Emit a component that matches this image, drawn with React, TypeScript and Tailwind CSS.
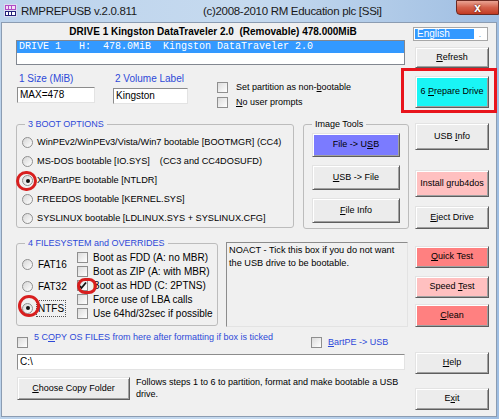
import type { ReactNode } from 'react';

function Btn({ children, className = '' }: { children: ReactNode; className?: string }) {
  return (
    <div
      className={`flex items-center justify-center border border-t-[#e3e3e3] border-l-[#e3e3e3] border-r-[#5e5e5e] border-b-[#5e5e5e] shadow-[inset_1px_1px_0_#ffffff,inset_-1px_-1px_0_#a0a0a0] ${className}`}
    >
      <span>{children}</span>
    </div>
  );
}

function Check({ checked = false }: { checked?: boolean }) {
  return (
    <div className="w-[11px] h-[11px] shrink-0 border border-[#8f8f8f] bg-gradient-to-br from-[#dcdcdc] to-[#ffffff] flex items-center justify-center">
      {checked && (
        <svg width="9" height="9" viewBox="0 0 9 9">
          <path d="M1 4.5 L3.5 7 L8 1.5" fill="none" stroke="#111" strokeWidth="1.8" />
        </svg>
      )}
    </div>
  );
}

function Radio({ checked = false }: { checked?: boolean }) {
  return (
    <div className="w-[11px] h-[11px] shrink-0 rounded-full border border-[#8f8f8f] bg-gradient-to-br from-[#d6d6d6] to-[#ffffff] flex items-center justify-center">
      {checked && <div className="w-[4px] h-[4px] rounded-full bg-[#111]" />}
    </div>
  );
}

function Group({ title, blue = true, className = '', children }: { title: string; blue?: boolean; className?: string; children: ReactNode }) {
  return (
    <div className={`relative border border-[#bcbcbc] rounded-[3px] ${className}`}>
      <span
        className={`absolute -top-[7px] left-[8px] px-[3px] bg-[#f0f0f0] leading-[12px] ${blue ? 'text-[#2e49d8]' : 'text-black'}`}
      >
        {title}
      </span>
      {children}
    </div>
  );
}

const bootOptions = [
  <>WinPEv2/WinPEv3/Vista/Win7 bootable [BOOTMGR] (CC4)</>,
  <>
    MS-DOS bootable [IO.SYS]<span className="ml-[10px]">(CC3 and CC4DOSUFD)</span>
  </>,
  <>XP/BartPE bootable [NTLDR]</>,
  <>FREEDOS bootable [KERNEL.SYS]</>,
  <>SYSLINUX bootable [LDLINUX.SYS + SYSLINUX.CFG]</>,
];

const overrides = [
  'Boot as FDD (A: no MBR)',
  'Boot as ZIP (A: with MBR)',
  'Boot as HDD (C: 2PTNS)',
  'Force use of LBA calls',
  'Use 64hd/32sec if possible',
];

export default function App() {
  return (
    <div className="relative w-[499px] h-[419px] overflow-hidden bg-gradient-to-r from-[#bcd3ec] via-[#c6daef] to-[#9fbee2] font-['Liberation_Sans',Arial,sans-serif] text-[9px] text-black">
      {/* title bar */}
      <div className="h-[22px] flex items-start">
        <svg className="mt-[4px] ml-[4px]" width="13" height="13" viewBox="0 0 13 13">
          <rect x="0" y="0" width="13" height="13" fill="#dcdcf0" />
          <rect x="1" y="1" width="11" height="5" fill="#b04cc4" />
          <rect x="2" y="2" width="2" height="3" fill="#f4e0f8" />
          <rect x="5" y="2" width="2" height="3" fill="#f4e0f8" />
          <rect x="8" y="2" width="3" height="3" fill="#f4e0f8" />
          <rect x="1" y="7" width="11" height="5" fill="#23237a" />
          <rect x="2" y="8" width="2" height="3" fill="#ffffff" />
          <rect x="5" y="8" width="2" height="3" fill="#ffffff" />
          <rect x="8" y="8" width="3" height="3" fill="#ffffff" />
        </svg>
        <span className="ml-[4px] mt-[3px] text-[11.5px] tracking-[-0.3px] text-[#1a1a1a]">
          RMPREPUSB v.2.0.811
        </span>
        <span className="ml-[66px] mt-[3px] text-[11.5px] tracking-[-0.3px] text-[#1a1a1a]">
          (c)2008-2010 RM Education plc [SSi]
        </span>
        <div className="ml-auto w-[43px] h-[15px] rounded-bl-[4px] border border-[#6b2a22] bg-gradient-to-b from-[#e9a393] via-[#d3604a] to-[#c23a21] flex items-center justify-center">
          <span className="text-white font-bold text-[12px] leading-none [text-shadow:0_0_2px_#3a0d05]">x</span>
        </div>
      </div>

      {/* client area */}
      <div className="ml-[1px] w-[496px] h-[395px] bg-[#f0f0f0] border border-[#8b9cb2] flex pl-[14px]">
        {/* left column */}
        <div className="w-[394px] flex flex-col">
          <div className="mt-[2px] h-[13px] flex items-center justify-center font-bold text-[10px] whitespace-pre">
            DRIVE 1 Kingston DataTraveler 2.0  (Removable) 478.000MiB
          </div>
          <div className="mt-[2px] w-[389px] h-[25px] bg-white border border-[#828790]">
            <div className="h-[12px] bg-[#3399ff] text-white font-['Liberation_Mono',monospace] text-[10px] leading-[12px] pl-[2px] whitespace-pre">
              DRIVE 1   H:  478.0MiB  Kingston DataTraveler 2.0
            </div>
          </div>

          {/* size / label / options */}
          <div className="mt-[9px] h-[30px] flex">
            <div className="flex flex-col w-[97px]">
              <span className="pl-[3px] text-[#2e49d8] text-[10px] leading-[10px]">1 Size (MiB)</span>
              <div className="mt-[3px] ml-[1px] w-[78px] h-[16px] bg-white border border-[#8c8c8c] border-b-[#e3e3e3] border-r-[#e3e3e3] pl-[2px] text-[10px] leading-[14px]">
                MAX=478
              </div>
            </div>
            <div className="flex flex-col w-[104px]">
              <span className="pl-[2px] text-[#2e49d8] text-[10px] leading-[10px]">2 Volume Label</span>
              <div className="mt-[4px] w-[75px] h-[16px] bg-white border border-[#8c8c8c] border-b-[#e3e3e3] border-r-[#e3e3e3] pl-[2px] text-[10px] leading-[14px]">
                Kingston
              </div>
            </div>
            <div className="flex flex-col pt-[8px] gap-[4px]">
              <div className="flex items-center gap-[8px] h-[11px]">
                <Check />
                <span>
                  Set partition as non-<u>b</u>ootable
                </span>
              </div>
              <div className="flex items-center gap-[8px] h-[11px]">
                <Check />
                <span>
                  <u>N</u>o user prompts
                </span>
              </div>
            </div>
          </div>

          {/* boot options + image tools */}
          <div className="mt-[20px] h-[105px] flex">
            <Group title="3 BOOT OPTIONS" className="w-[278px] h-[104px] pt-[8px] pl-[5px]">
              {bootOptions.map((o, i) => (
                <div key={i} className="h-[19px] flex items-center gap-[4px] whitespace-pre text-[9.2px]">
                  <Radio checked={i === 2} />
                  <span>{o}</span>
                </div>
              ))}
            </Group>
            <Group title="Image Tools" blue={false} className="ml-[9px] w-[106px] h-[105px] pt-[8px] pl-[8px] flex flex-col gap-[8px]">
              <Btn className="w-[88px] h-[24px] bg-[#7b7bff]">
                File -&gt; U<u>S</u>B
              </Btn>
              <Btn className="w-[88px] h-[25px] bg-[#ececec]">
                <u>U</u>SB -&gt; File
              </Btn>
              <Btn className="w-[88px] h-[25px] bg-[#ececec]">
                <u>F</u>ile Info
              </Btn>
            </Group>
          </div>

          {/* filesystem + NOACT */}
          <div className="mt-[13px] h-[85px] flex">
            <Group title="4 FILESYSTEM and OVERRIDES" className="mt-[1px] w-[202px] h-[83px] flex">
              <div className="w-[60px] pt-[9px] pl-[5px] flex flex-col">
                {['FAT16', 'FAT32', 'NTFS'].map((f, i) => (
                  <div key={f} className="h-[22px] flex items-center gap-[4px]">
                    <Radio checked={i === 2} />
                    <span className={`text-[10px] ${i === 2 ? 'outline outline-1 outline-dotted outline-[#555] px-[1px]' : 'px-[1px]'}`}>
                      {f}
                    </span>
                  </div>
                ))}
              </div>
              <div className="pt-[6px] flex flex-col">
                {overrides.map((o, i) => (
                  <div key={o} className="h-[14px] flex items-center gap-[5px]">
                    <Check checked={i === 2} />
                    <span className="text-[10px]">{o}</span>
                  </div>
                ))}
              </div>
            </Group>
            <div className="ml-[8px] w-[182px] h-[85px] border border-[#8c8c8c] border-b-[#e3e3e3] border-r-[#e3e3e3] pl-[2px] pr-[12px] leading-[13px] pt-[1px] text-[9.2px]">
              NOACT - Tick this box if you do not want the USB drive to be bootable.
            </div>
          </div>

          {/* copy row */}
          <div className="mt-[6px] h-[15px] flex items-start">
            <div className="mt-[4px] ml-[1px]">
              <Check />
            </div>
            <span className="ml-[6px] text-[#2e49d8] leading-[10px] mt-[-1px]">
              5 C<u>O</u>PY OS FILES from here after formatting if box is ticked
            </span>
            <div className="ml-[38px] mt-[4px]">
              <Check />
            </div>
            <span className="ml-[6px] mt-[4px] text-[#2e49d8] leading-[11px]">
              <u>B</u>artPE -&gt; USB
            </span>
          </div>
          <div className="mt-[6px] ml-[1px] w-[388px] h-[16px] bg-white border border-[#8c8c8c] border-b-[#e3e3e3] border-r-[#e3e3e3] pl-[2px] text-[10px] leading-[14px]">
            C:\
          </div>
          <div className="mt-[7px] flex items-start">
            <Btn className="ml-[1px] w-[113px] h-[23px] bg-[#ececec]">
              <u>C</u>hoose Copy Folder
            </Btn>
            <p className="ml-[6px] mt-[-1px] w-[270px] leading-[12px]">
              Follows steps 1 to 6 to partition, format and make bootable a USB drive.
            </p>
          </div>
        </div>

        {/* right column */}
        <div className="ml-[5px] w-[74px] flex flex-col">
          <div className="mt-[4px] -ml-[2px] w-[75px] h-[14px] bg-white border border-[#a7a7a7] flex p-[1px]">
            <div className="flex-1 bg-[#3399ff] text-white text-[10px] leading-[10px] pl-[2px]">English</div>
            <div className="w-[12px] flex items-end justify-center text-[7px] leading-[8px] text-[#444]">.</div>
          </div>
          <Btn className="mt-[6px] h-[21px] bg-[#ececec]">
            <u>R</u>efresh
          </Btn>
          <Btn className="mt-[8px] h-[32px] bg-[#19f5f5]">
            6 <u>P</u>repare Drive
          </Btn>
          <Btn className="mt-[15px] h-[27px] bg-[#ececec]">
            USB <u>I</u>nfo
          </Btn>
          <Btn className="mt-[20px] h-[27px] bg-[#ffc0c0]">
            Install <u>g</u>rub4dos
          </Btn>
          <Btn className="mt-[9px] h-[23px] bg-[#ececec]">
            <u>E</u>ject Drive
          </Btn>
          <Btn className="mt-[17px] h-[22px] bg-[#ff8080]">
            <u>Q</u>uick Test
          </Btn>
          <Btn className="mt-[8px] h-[22px] bg-[#ffc0c0]">
            Speed <u>T</u>est
          </Btn>
          <Btn className="mt-[6px] h-[23px] bg-[#ff8080]">
            <u>C</u>lean
          </Btn>
          <Btn className="mt-[25px] h-[22px] bg-[#ececec]">
            <u>H</u>elp
          </Btn>
          <Btn className="mt-[14px] h-[22px] bg-[#ececec]">
            E<u>x</u>it
          </Btn>
        </div>
      </div>

      {/* red annotations */}
      <div className="absolute left-[401px] top-[68px] w-[96px] h-[45px] border-[3px] border-[#e8141c]" />
      <div className="absolute left-[16px] top-[171px] w-[21px] h-[20px] rounded-full border-[3px] border-[#d81e1e]" />
      <div className="absolute left-[18px] top-[295px] w-[22px] h-[22px] rounded-full border-[3px] border-[#d81e1e]" />
      <div className="absolute left-[77px] top-[278px] w-[20px] h-[16px] rounded-full border-[3px] border-[#d81e1e]" />
    </div>
  );
}
